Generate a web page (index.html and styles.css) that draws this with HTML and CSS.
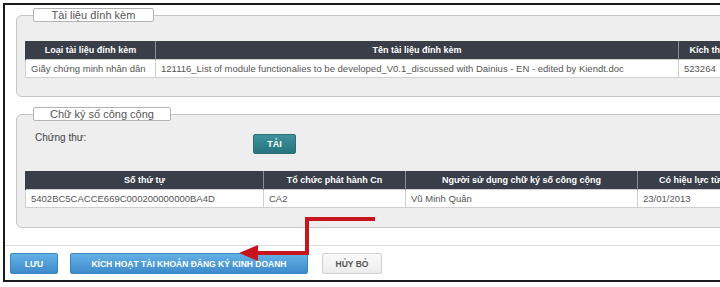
FILE: index.html
```html
<!DOCTYPE html>
<html lang="vi">
<head>
    <meta charset="UTF-8">
    <meta name="viewport" content="width=device-width, initial-scale=1.0">
    <title>Kích hoạt tài khoản</title>
    <link rel="stylesheet" href="styles.css">
</head>
<body>

    <div class="frame">
        <fieldset class="group group-docs">
            <legend><span class="legend-box legend-docs">Tài liệu đính kèm</span></legend>
            <table class="grid grid-docs">
                <colgroup>
                    <col style="width:130px">
                    <col style="width:523px">
                    <col style="width:70px">
                </colgroup>
                <tr>
                    <th>Loại tài liệu đính kèm</th>
                    <th>Tên tài liệu đính kèm</th>
                    <th>Kích thước</th>
                </tr>
                <tr>
                    <td>Giấy chứng minh nhân dân</td>
                    <td>121116_List of module functionalies to be developed_V0.1_discussed with Dainius - EN - edited by Kiendt.doc</td>
                    <td>523264</td>
                </tr>
            </table>
        </fieldset>

        <fieldset class="group group-sign">
            <legend><span class="legend-box legend-sign">Chữ ký số công cộng</span></legend>
            <div class="cert-row">
                <span class="cert-label">Chứng thư:</span>
                <button type="button" class="btn-load">TẢI</button>
            </div>
            <table class="grid grid-sign">
                <colgroup>
                    <col style="width:238px">
                    <col style="width:142px">
                    <col style="width:232px">
                    <col style="width:104px">
                </colgroup>
                <tr>
                    <th>Số thứ tự</th>
                    <th>Tổ chức phát hành Cn</th>
                    <th>Người sử dụng chữ ký số công cộng</th>
                    <th>Có hiệu lực từ</th>
                </tr>
                <tr>
                    <td>5402BC5CACCE669C000200000000BA4D</td>
                    <td>CA2</td>
                    <td>Vũ Minh Quân</td>
                    <td>23/01/2013</td>
                </tr>
            </table>
        </fieldset>

        <div class="actions">
            <button type="button" class="btn btn-blue btn-save">LƯU</button>
            <button type="button" class="btn btn-blue btn-activate">KÍCH HOẠT TÀI KHOẢN ĐĂNG KÝ KINH DOANH</button>
            <button type="button" class="btn btn-cancel">HỦY BỎ</button>
        </div>
    </div>

    <!-- mũi tên chỉ vào nút kích hoạt -->
    <svg class="arrow" width="720" height="287" viewBox="0 0 720 287">
        <path d="M375 219 H307 V253 H254" fill="none" stroke="#c8141c" stroke-width="4" stroke-linejoin="miter"/>
        <polygon points="239,253 258,245 258,261" fill="#c8141c"/>
    </svg>

</body>
</html>
```

FILE: styles.css
```css
/* Khung chung */
body {
    margin: 0;
    overflow: hidden;
    background: #fff;
    font-family: 'Liberation Sans', Arial, sans-serif;
    color: #444;
}

.frame {
    width: 780px;
    margin: 3px 0 0 3px;
    padding: 3px 0 0 11px;
    border: 2px solid #1a1a1a;
    border-right: none;
    height: 279px;
    box-sizing: border-box;
}

/* Nhóm fieldset */
.group {
    width: 760px;
    margin: 0;
    padding: 19px 0 18px 8px;
    border: 1px solid #c6c6c6;
    border-radius: 6px;
    background: #eeeeee;
    box-sizing: border-box;
}

.group legend {
    margin-left: 8px;
    padding: 0;
}

.legend-box {
    display: block;
    height: 14px;
    box-sizing: border-box;
    border: 1px solid #b3b3b3;
    border-radius: 2px;
    background: #fff;
    font-size: 11px;
    line-height: 12px;
    color: #555;
    text-align: center;
}

.legend-docs {
    width: 121px;
}

.legend-sign {
    width: 138px;
}

.group-sign {
    margin-top: 10px;
    padding-top: 9px;
    padding-bottom: 19px;
}

/* Bảng */
.grid {
    border-collapse: collapse;
    table-layout: fixed;
    font-size: 9.5px;
}

.grid th {
    height: 18px;
    padding: 0 4px;
    background: #393e49;
    color: #fff;
    font-size: 9px;
    font-weight: bold;
    text-align: center;
    border-left: 1px solid #8a8e96;
    white-space: nowrap;
    overflow: hidden;
}

.grid th:first-child {
    border-left: 1px solid #393e49;
}

.grid td {
    height: 17px;
    padding: 0 5px;
    background: #fff;
    color: #555;
    border: 1px solid #cfcfcf;
    white-space: nowrap;
    overflow: hidden;
}

/* Hàng chứng thư */
.cert-row {
    display: flex;
    align-items: flex-start;
    height: 24px;
    margin-bottom: 17px;
}

.cert-label {
    width: 218px;
    padding: 2px 0 0 10px;
    font-size: 10px;
    color: #444;
}

.btn-load {
    margin-top: 4px;
    width: 43px;
    height: 20px;
    padding: 0;
    border: 1px solid #2a6f78;
    border-radius: 2px;
    background: linear-gradient(#3d939d, #27737d);
    color: #fff;
    font-family: inherit;
    font-size: 9px;
    font-weight: bold;
}

/* Nút hành động */
.actions {
    display: flex;
    gap: 12px;
    margin: 17px 0 0 -11px;
    padding: 7px 0 0 5px;
    border-top: 1px solid #dcdcdc;
}

.btn {
    height: 21px;
    padding: 0;
    border-radius: 2px;
    font-family: inherit;
    font-size: 8.5px;
    font-weight: bold;
}

.btn-blue {
    border: 1px solid #3a87c4;
    background: linear-gradient(#64b0e6, #3d8bcb);
    color: #fff;
}

.btn-save {
    width: 48px;
}

.btn-activate {
    width: 238px;
}

.btn-cancel {
    margin-left: 2px;
    width: 60px;
    border: 1px solid #d0d0d0;
    background: linear-gradient(#fafafa, #ececec);
    color: #555;
}

/* Mũi tên đỏ nằm trên nội dung */
.arrow {
    position: absolute;
    left: 0;
    top: 0;
    pointer-events: none;
}
```
